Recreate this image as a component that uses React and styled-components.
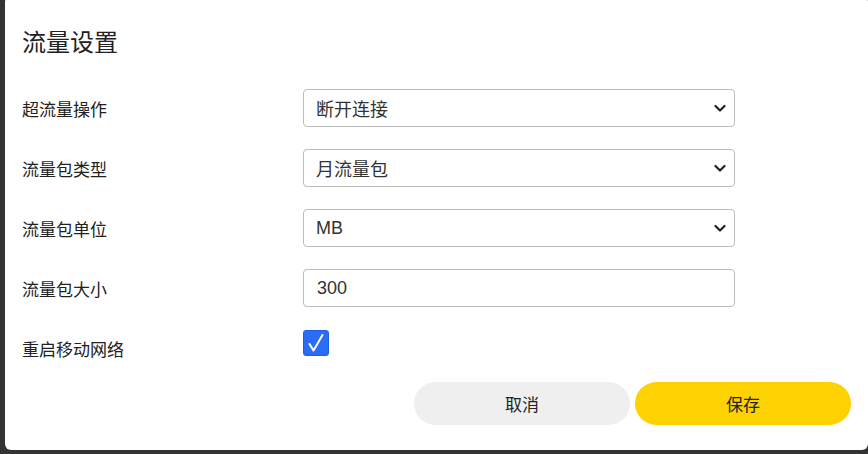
import React, { useState } from "react";
import styled, { createGlobalStyle } from "styled-components";

const Global = createGlobalStyle`
	html, body {
		margin: 0;
		padding: 0;
		background: #333;
		height: 454px;
		overflow: hidden;
	}
	body {
		font-family: "Liberation Sans", "Noto Sans CJK SC", sans-serif;
		color: #222;
	}
`;

const Dialog = styled.div`
	box-sizing: border-box;
	margin: -4px 0 0 5px;
	width: 863px;
	height: 454px;
	background: #fff;
	border-radius: 6px;
	padding: 34px 17px 0 17px;
`;

const Title = styled.h2`
	margin: 0;
	height: 26px;
	line-height: 26px;
	font-size: 24px;
	font-weight: 400;
	color: #222;
`;

const Form = styled.div`
	display: grid;
	grid-template-columns: 281px 432px;
	row-gap: 22px;
	margin-top: 33px;
`;

const Label = styled.div`
	height: 38px;
	display: flex;
	align-items: center;
	font-size: 17px;
	color: #222;
`;

const Field = styled.div`
	position: relative;
	box-sizing: border-box;
	height: 38px;
	border: 1px solid #bdbdbd;
	border-radius: 4px;
	display: flex;
	align-items: center;
	padding: 0 ${(p) => (p.$text ? "13px" : "12px")};
	font-size: 18px;
	color: #333;
`;

const Chevron = styled.svg`
	position: absolute;
	right: 8px;
	top: 14px;
	width: 12px;
	height: 9px;
`;

const Check = styled.div`
	width: 26px;
	height: 26px;
	margin-top: 1px;
	box-sizing: border-box;
	border-radius: 3px;
	background: #2a6cf6;
	border: 1px solid #1e5ee0;
	display: flex;
	align-items: center;
	justify-content: center;
	cursor: pointer;
`;

const Actions = styled.div`
	display: flex;
	justify-content: flex-end;
	gap: 5px;
	margin-top: 15px;
`;

const Button = styled.button`
	width: 216px;
	height: 43px;
	border: none;
	border-radius: 22px;
	font-family: inherit;
	font-size: 17px;
	color: #222;
	background: ${(p) => (p.$primary ? "#fed100" : "#efefef")};
	cursor: pointer;
`;

const Select = ({ value }) => (
	<Field>
		{value}
		<Chevron viewBox="0 0 12 9">
			<path d="M1.5 2 L6 6.5 L10.5 2" fill="none" stroke="#222" strokeWidth="2.2" strokeLinecap="round" strokeLinejoin="round" />
		</Chevron>
	</Field>
);

const App = () => {
	const [checked, setChecked] = useState(true);
	return (
		<>
			<Global />
			<Dialog>
				<Title>流量设置</Title>
				<Form>
					<Label>超流量操作</Label>
					<Select value="断开连接" />
					<Label>流量包类型</Label>
					<Select value="月流量包" />
					<Label>流量包单位</Label>
					<Select value="MB" />
					<Label>流量包大小</Label>
					<Field $text>300</Field>
					<Label>重启移动网络</Label>
					<div>
						<Check onClick={() => setChecked(!checked)}>
							{checked && (
								<svg width="18" height="20" viewBox="0 0 18 20">
									<path d="M2.5 11 L6.5 17.5 L15.5 2" fill="none" stroke="#fff" strokeWidth="2" strokeLinecap="round" strokeLinejoin="round" />
								</svg>
							)}
						</Check>
					</div>
				</Form>
				<Actions>
					<Button>取消</Button>
					<Button $primary>保存</Button>
				</Actions>
			</Dialog>
		</>
	);
};

export default App;
